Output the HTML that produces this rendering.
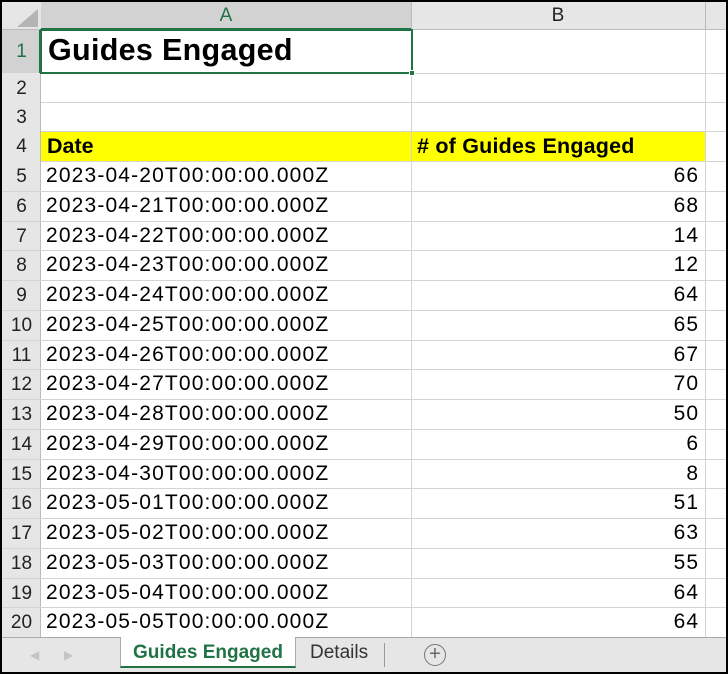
<!DOCTYPE html>
<html><head><meta charset="utf-8"><style>
*{margin:0;padding:0;box-sizing:border-box}
body{width:728px;height:674px;overflow:hidden;background:#fff;font-family:"Liberation Sans",sans-serif;position:relative}
.a{position:absolute}
.hl{position:absolute;height:1px;background:#d4d4d4}
.vl{position:absolute;width:1px;background:#d4d4d4}
.rh{position:absolute;left:2px;width:39px;text-align:center;font-size:19px;color:#222;background:#e6e6e6}
.c{position:absolute;font-size:21px;color:#000;white-space:nowrap}
.d{letter-spacing:1.15px}
.n{position:absolute;right:29px;font-size:21px;color:#000;text-align:right;letter-spacing:1px}
</style></head><body>
<div class="a" style="left:0;top:0;width:728px;height:30px;background:#e6e6e6"></div>
<div class="a" style="left:41px;top:2px;width:370px;height:28px;background:#d2d2d2;border-bottom:2px solid #217346"></div>
<div class="a" style="left:41px;top:5px;width:370px;text-align:center;font-size:19px;color:#217346">A</div>
<div class="a" style="left:411px;top:5px;width:294px;text-align:center;font-size:19px;color:#222">B</div>
<div class="a" style="left:411px;top:2px;width:1px;height:28px;background:#bbb"></div>
<div class="a" style="left:705px;top:2px;width:1px;height:28px;background:#bbb"></div>
<div class="a" style="left:0;top:29px;width:728px;height:1px;background:#bbb"></div>
<svg class="a" style="left:17px;top:9px" width="21" height="18"><polygon points="21,0 21,18 0,18" fill="#b4b4b4"/></svg>
<div class="a" style="left:0;top:30px;width:41px;height:608px;background:#e6e6e6;border-right:1px solid #bbb"></div>
<div class="a" style="left:0;top:30px;width:41px;height:43px;background:#d2d2d2;border-right:2px solid #217346"></div>
<div class="rh" style="top:41px;background:none;color:#217346">1</div>
<div class="rh" style="top:78px;background:none">2</div>
<div class="rh" style="top:107px;background:none">3</div>
<div class="rh" style="top:136px;background:none">4</div>
<div class="a" style="left:41px;top:131px;width:664px;height:30px;background:#ffff00"></div>
<div class="c" style="left:47px;top:134px;font-weight:bold;font-size:21.5px">Date</div>
<div class="c" style="left:417px;top:134px;font-weight:bold;font-size:21.5px;letter-spacing:0.2px"># of Guides Engaged</div>
<div class="hl" style="left:41px;top:73px;width:685px"></div>
<div class="hl" style="left:41px;top:102px;width:685px"></div>
<div class="hl" style="left:41px;top:131px;width:685px"></div>
<div class="hl" style="left:41px;top:161px;width:685px"></div>
<div class="vl" style="left:411px;top:30px;height:608px"></div>
<div class="vl" style="left:705px;top:30px;height:608px"></div>
<div id="rows"></div>
<div class="a" style="left:40px;top:29px;width:373px;height:45px;border:2px solid #217346;background:#fff"></div>
<div class="a" style="left:409px;top:70px;width:6px;height:6px;background:#217346;border:1px solid #fff"></div>
<div class="c" style="left:48px;top:33px;font-size:30.5px;font-weight:bold;letter-spacing:0.3px">Guides Engaged</div>
<div class="a" style="left:0;top:637px;width:728px;height:37px;background:#e6e6e6;border-top:1px solid #aaa"></div>
<div class="a" style="left:30px;top:648px;color:#c4c4c4;font-size:12px">&#9664;</div>
<div class="a" style="left:64px;top:648px;color:#c4c4c4;font-size:12px">&#9654;</div>
<div class="a" style="left:120px;top:637px;width:176px;height:31px;background:#fff;border-left:1px solid #aaa;border-right:1px solid #aaa;border-bottom:2px solid #217346"></div>
<div class="a" style="left:120px;top:642px;width:176px;text-align:center;font-size:19px;font-weight:bold;color:#217346">Guides Engaged</div>
<div class="a" style="left:310px;top:642px;font-size:19px;color:#333">Details</div>
<div class="a" style="left:384px;top:643px;width:1px;height:24px;background:#999"></div>
<div class="a" style="left:424px;top:644px;width:22px;height:22px;border:1.5px solid #777;border-radius:50%;text-align:center;line-height:18px;font-size:20px;color:#666">+</div>
<div class="a" style="left:0;top:0;width:728px;height:674px;border:2px solid #000"></div>
<script>
var d=["2023-04-20",66,"2023-04-21",68,"2023-04-22",14,"2023-04-23",12,"2023-04-24",64,"2023-04-25",65,"2023-04-26",67,"2023-04-27",70,"2023-04-28",50,"2023-04-29",6,"2023-04-30",8,"2023-05-01",51,"2023-05-02",63,"2023-05-03",55,"2023-05-04",64,"2023-05-05",64];
var h="";
for(var i=0;i<16;i++){var t=161+i*29.75;
h+='<div class="rh" style="top:'+(t+5)+'px;background:none">'+(i+5)+'</div>';
h+='<div class="c d" style="left:46px;top:'+(t+3)+'px">'+d[2*i]+'T00:00:00.000Z</div>';
h+='<div class="n" style="top:'+(t+3)+'px">'+d[2*i+1]+'</div>';
if(i<15)h+='<div class="hl" style="left:0;top:'+Math.round(t+29.75)+'px;width:726px"></div>';}
document.getElementById("rows").innerHTML=h;
</script>
</body></html>
